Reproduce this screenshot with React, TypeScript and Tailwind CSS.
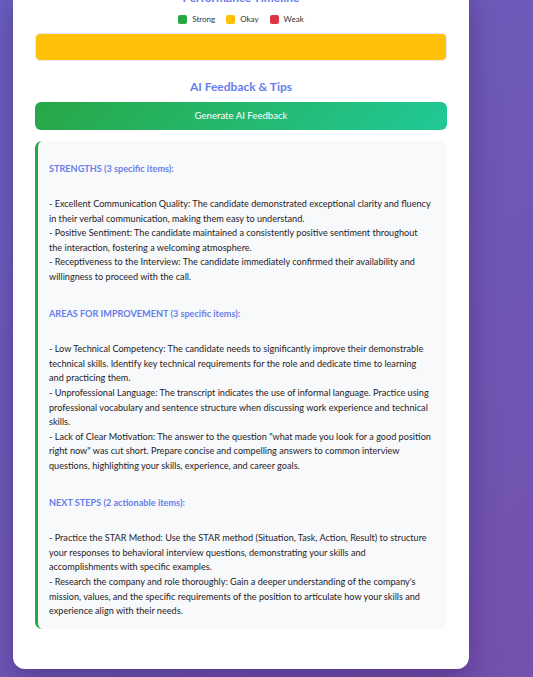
// line breaks kept as in the rendered feedback text
const sections = [
  {
    title: 'STRENGTHS (3 specific items):',
    items: [
      '- Excellent Communication Quality: The candidate demonstrated exceptional clarity and fluency\nin their verbal communication, making them easy to understand.',
      '- Positive Sentiment: The candidate maintained a consistently positive sentiment throughout\nthe interaction, fostering a welcoming atmosphere.',
      '- Receptiveness to the Interview: The candidate immediately confirmed their availability and\nwillingness to proceed with the call.',
    ],
  },
  {
    title: 'AREAS FOR IMPROVEMENT (3 specific items):',
    items: [
      '- Low Technical Competency: The candidate needs to significantly improve their demonstrable\ntechnical skills. Identify key technical requirements for the role and dedicate time to learning\nand practicing them.',
      '- Unprofessional Language: The transcript indicates the use of informal language. Practice using\nprofessional vocabulary and sentence structure when discussing work experience and technical\nskills.',
      '- Lack of Clear Motivation: The answer to the question "what made you look for a good position\nright now" was cut short. Prepare concise and compelling answers to common interview\nquestions, highlighting your skills, experience, and career goals.',
    ],
  },
  {
    title: 'NEXT STEPS (2 actionable items):',
    items: [
      '- Practice the STAR Method: Use the STAR method (Situation, Task, Action, Result) to structure\nyour responses to behavioral interview questions, demonstrating your skills and\naccomplishments with specific examples.',
      "- Research the company and role thoroughly: Gain a deeper understanding of the company's\nmission, values, and the specific requirements of the position to articulate how your skills and\nexperience align with their needs.",
    ],
  },
]

const legend = [
  { label: 'Strong', color: 'bg-[#28a745]' },
  { label: 'Okay', color: 'bg-[#ffc107]' },
  { label: 'Weak', color: 'bg-[#dc3545]' },
]

const App = () => {
  return (
    <div
      className="h-[677px] overflow-hidden bg-[linear-gradient(135deg,#6a60c0_0%,#7351ad_100%)]"
      style={{ fontFamily: 'Lato, "Open Sans", sans-serif' }}
    >
      <div className="-mt-[10px] ml-[13px] w-[456px] rounded-b-[12px] bg-white px-[22px] pb-[40px] shadow-[0_12px_30px_rgba(40,10,80,0.35)]">
        <h3 className="h-[16px] text-center text-[12px] leading-[16px] font-bold text-[#667eea]">
          Performance Timeline
        </h3>

        <div className="mt-[9px] flex h-[9px] items-center justify-center gap-[11px]">
          {legend.map((l) => (
            <div key={l.label} className="flex items-center gap-[5px]">
              <span className={`h-[9px] w-[9px] rounded-[2px] ${l.color}`} />
              <span className="text-[8px] leading-[9px] text-[#333]">{l.label}</span>
            </div>
          ))}
        </div>

        <div className="mt-[9px] h-[28px] rounded-[5px] border border-[#e9ecef] bg-[#ffc107]" />

        <h3 className="mt-[18px] h-[16px] text-center text-[12px] leading-[16px] font-bold text-[#667eea]">
          AI Feedback &amp; Tips
        </h3>

        <button
          type="button"
          className="mt-[7px] flex h-[28px] w-full items-center justify-center rounded-[6px] bg-[linear-gradient(135deg,#28a745_0%,#20c997_100%)] text-[9.6px] text-white"
        >
          Generate AI Feedback
        </button>

        <div className="mt-[11px] rounded-[7px] border-l-[3px] border-[#28a745] bg-[#f8f9fa] pt-[21px] pr-[8px] pb-[10px] pl-[11px] text-[9.15px] leading-[14.55px] whitespace-pre-line text-[#1f2328]">
          {sections.map((s, i) => (
            <div key={s.title} className={i > 0 ? 'mt-[23px]' : ''}>
              <div className="mb-[20.5px] font-bold text-[#667eea]">{s.title}</div>
              {s.items.map((item) => (
                <div key={item}>{item}</div>
              ))}
            </div>
          ))}
        </div>
      </div>
    </div>
  )
}

export default App
